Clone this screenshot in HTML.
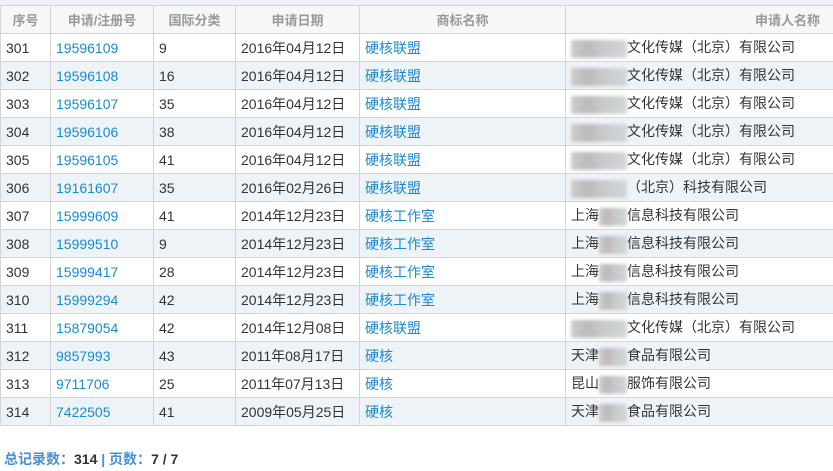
<!DOCTYPE html><html><head><meta charset="utf-8"><style>
body{margin:0;width:833px;height:471px;background:#fff;font-family:"Liberation Sans","Noto Sans CJK SC",sans-serif;font-size:14px;color:#333;position:relative;overflow:hidden}
.top{position:absolute;left:0;top:0;width:833px;height:5px;background:#eef2f6}
table{position:absolute;left:0;top:5px;border-collapse:collapse;table-layout:fixed;width:834px}
td,th{border:1px solid #d4d4d4;height:27px;padding:0 0 0 5px;white-space:nowrap;overflow:hidden}
th{background:#f6f7f8;color:#999;font-weight:bold;text-align:center;padding:0;font-size:13px}
tr:nth-child(odd) td{background:#eef3f8}
a{color:#1b8ad0;text-decoration:none}
.b{display:inline-block;width:56px;height:18px;vertical-align:middle;background:linear-gradient(90deg,#ccc,#bbb 30%,#c8cbcd 60%,#d4d6d8);filter:blur(1.5px)}
.b.s{width:28px}
.foot{position:absolute;left:4px;top:449px;color:#4a90d9;font-weight:bold;font-size:14px}
.foot b{color:#333}
</style></head><body><div class="top"></div>
<table><colgroup><col style="width:50px"><col style="width:103px"><col style="width:82px"><col style="width:124px"><col style="width:206px"><col style="width:269px"></colgroup>
<tr><th>序号</th><th>申请/注册号</th><th>国际分类</th><th>申请日期</th><th>商标名称</th><th style="text-align:right;padding-right:14px">申请人名称</th></tr>
<tr><td>301</td><td><a>19596109</a></td><td>9</td><td>2016年04月12日</td><td><a>硬核联盟</a></td><td><span class="b"></span>文化传媒（北京）有限公司</td></tr>
<tr><td>302</td><td><a>19596108</a></td><td>16</td><td>2016年04月12日</td><td><a>硬核联盟</a></td><td><span class="b"></span>文化传媒（北京）有限公司</td></tr>
<tr><td>303</td><td><a>19596107</a></td><td>35</td><td>2016年04月12日</td><td><a>硬核联盟</a></td><td><span class="b"></span>文化传媒（北京）有限公司</td></tr>
<tr><td>304</td><td><a>19596106</a></td><td>38</td><td>2016年04月12日</td><td><a>硬核联盟</a></td><td><span class="b"></span>文化传媒（北京）有限公司</td></tr>
<tr><td>305</td><td><a>19596105</a></td><td>41</td><td>2016年04月12日</td><td><a>硬核联盟</a></td><td><span class="b"></span>文化传媒（北京）有限公司</td></tr>
<tr><td>306</td><td><a>19161607</a></td><td>35</td><td>2016年02月26日</td><td><a>硬核联盟</a></td><td><span class="b"></span>（北京）科技有限公司</td></tr>
<tr><td>307</td><td><a>15999609</a></td><td>41</td><td>2014年12月23日</td><td><a>硬核工作室</a></td><td>上海<span class="b s"></span>信息科技有限公司</td></tr>
<tr><td>308</td><td><a>15999510</a></td><td>9</td><td>2014年12月23日</td><td><a>硬核工作室</a></td><td>上海<span class="b s"></span>信息科技有限公司</td></tr>
<tr><td>309</td><td><a>15999417</a></td><td>28</td><td>2014年12月23日</td><td><a>硬核工作室</a></td><td>上海<span class="b s"></span>信息科技有限公司</td></tr>
<tr><td>310</td><td><a>15999294</a></td><td>42</td><td>2014年12月23日</td><td><a>硬核工作室</a></td><td>上海<span class="b s"></span>信息科技有限公司</td></tr>
<tr><td>311</td><td><a>15879054</a></td><td>42</td><td>2014年12月08日</td><td><a>硬核联盟</a></td><td><span class="b"></span>文化传媒（北京）有限公司</td></tr>
<tr><td>312</td><td><a>9857993</a></td><td>43</td><td>2011年08月17日</td><td><a>硬核</a></td><td>天津<span class="b s"></span>食品有限公司</td></tr>
<tr><td>313</td><td><a>9711706</a></td><td>25</td><td>2011年07月13日</td><td><a>硬核</a></td><td>昆山<span class="b s"></span>服饰有限公司</td></tr>
<tr><td>314</td><td><a>7422505</a></td><td>41</td><td>2009年05月25日</td><td><a>硬核</a></td><td>天津<span class="b s"></span>食品有限公司</td></tr>
</table>
<div class="foot">总记录数：<b>314</b> | 页数：<b>7 / 7</b></div>
</body></html>
